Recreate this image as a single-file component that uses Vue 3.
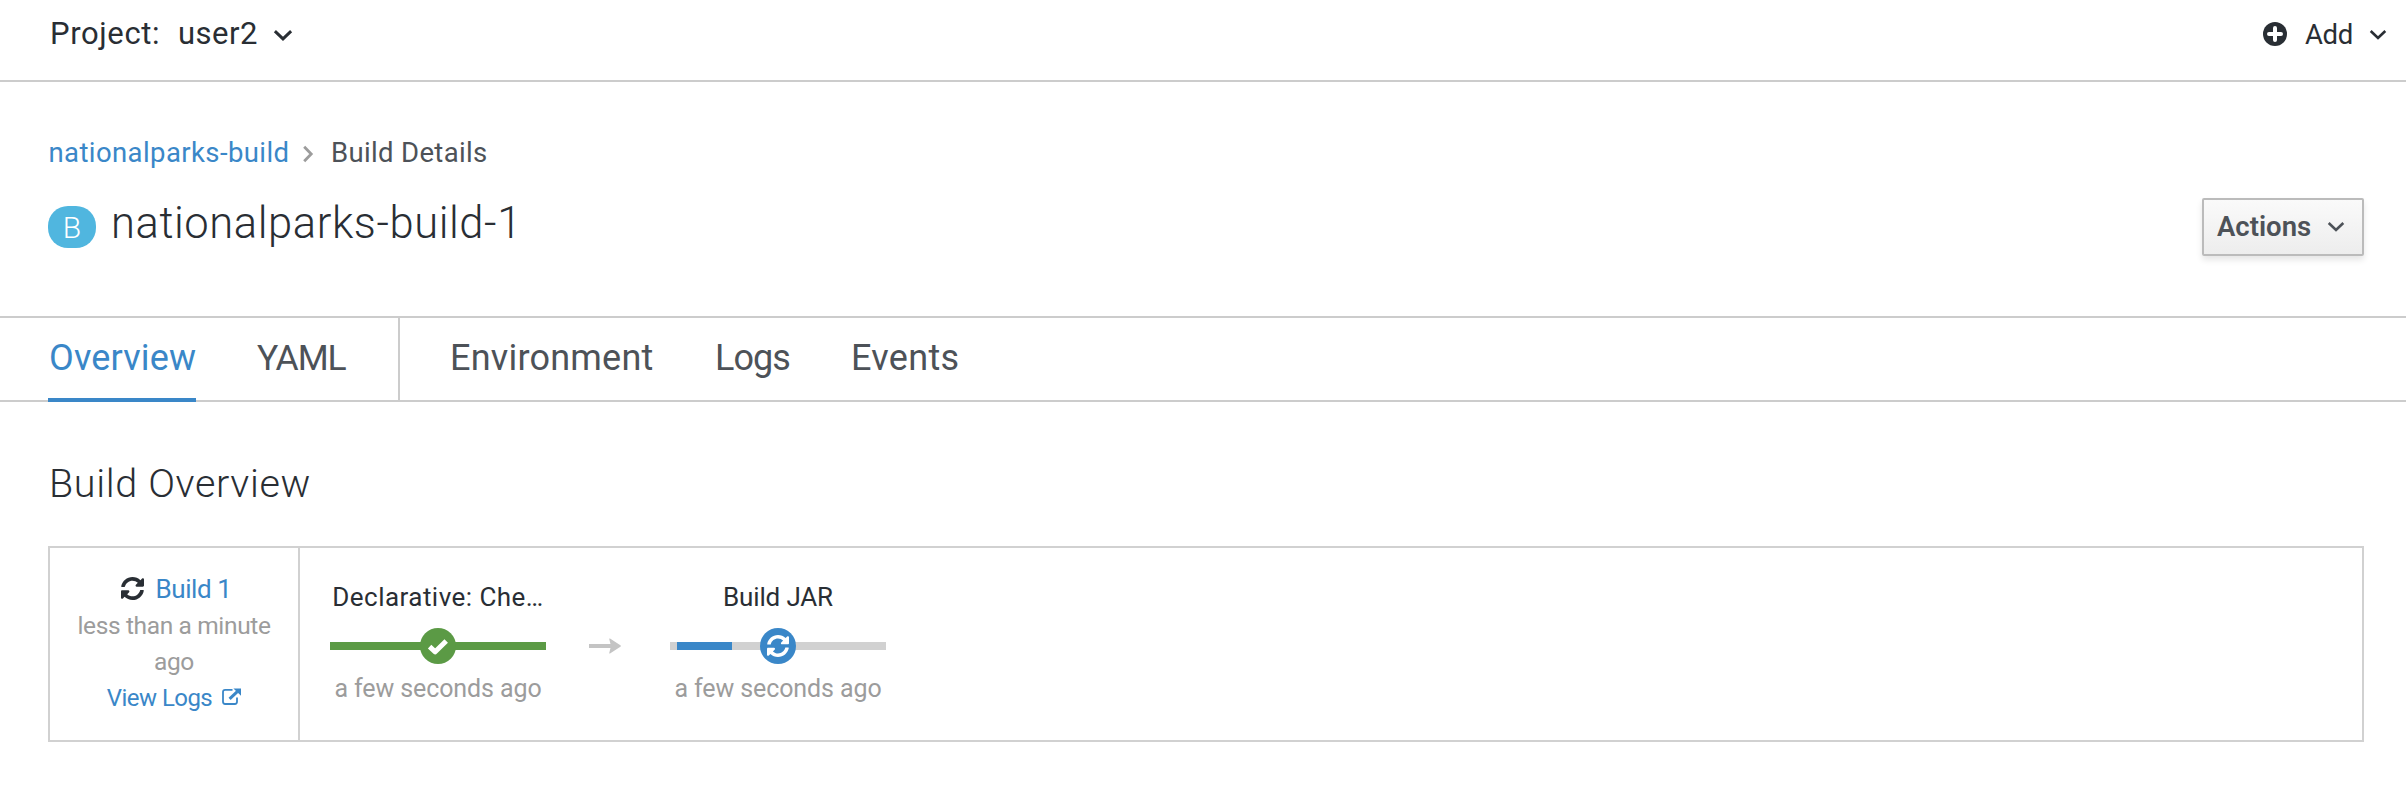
<script setup>
const primaryTabs = [
  { label: 'Overview', key: 'overview', active: true },
  { label: 'YAML', key: 'yaml' },
]
const secondaryTabs = [
  { label: 'Environment', key: 'environment' },
  { label: 'Logs', key: 'logs' },
  { label: 'Events', key: 'events' },
]
const syncPath =
  'M370.72 133.28C339.458 104.008 298.888 87.962 255.848 88c-77.458.068-144.328 53.178-162.791 126.85-1.344 5.363-6.122 9.15-11.651 9.15H24.103c-7.498 0-13.194-6.807-11.807-14.176C33.933 94.924 134.813 8 256 8c66.448 0 126.791 26.136 171.315 68.685L463.03 40.97C478.149 25.851 504 36.559 504 57.941V192c0 13.255-10.745 24-24 24H345.941c-21.382 0-32.09-25.851-16.971-40.971l41.75-41.749zM32 296h134.059c21.382 0 32.09 25.851 16.971 40.971l-41.75 41.75c31.262 29.273 71.835 45.319 114.876 45.28 77.418-.07 144.315-53.144 162.787-126.849 1.344-5.363 6.122-9.15 11.651-9.15h57.304c7.498 0 13.194 6.807 11.807 14.176C478.067 417.076 377.187 504 256 504c-66.448 0-126.791-26.136-171.315-68.685L48.97 471.03C33.851 486.149 8 475.441 8 454.059V320c0-13.255 10.745-24 24-24z'
</script>

<template>
  <div class="page">
    <header class="topbar">
      <div class="project">
        <span class="project-label">Project:</span>
        <span class="project-name">user2</span>
        <svg class="caret caret-project" viewBox="0 0 18 11"><path d="M.9 1.2 9 8.9l8.1-7.7" /></svg>
      </div>
      <div class="add">
        <svg class="plus" viewBox="0 0 24 24">
          <circle cx="12" cy="12" r="12" />
          <path d="M12 6v12M6 12h12" />
        </svg>
        <span class="add-label">Add</span>
        <svg class="caret caret-add" viewBox="0 0 16 10"><path d="M.7 1 8 8l7.3-7" /></svg>
      </div>
    </header>

    <section class="heading">
      <nav class="breadcrumb">
        <a class="crumb-link">nationalparks-build</a>
        <svg class="crumb-sep" viewBox="0 0 10 16"><path d="M1.2.8 8.2 8l-7 7.2" /></svg>
        <span class="crumb-current">Build Details</span>
      </nav>
      <div class="title-row">
        <span class="badge">B</span>
        <h1 class="title">nationalparks-build-1</h1>
        <button class="actions">
          <span class="actions-label">Actions</span>
          <svg class="caret caret-actions" viewBox="0 0 16 10"><path d="M.7 1 8 8l7.3-7" /></svg>
        </button>
      </div>
    </section>

    <nav class="tabs">
      <div class="tab-group primary">
        <a v-for="t in primaryTabs" :key="t.key" class="tab" :class="[t.key, { active: t.active }]">{{ t.label }}</a>
      </div>
      <div class="tab-group secondary">
        <a v-for="t in secondaryTabs" :key="t.key" class="tab" :class="t.key">{{ t.label }}</a>
      </div>
    </nav>

    <main class="content">
      <h2 class="section-title">Build Overview</h2>
      <div class="pipeline">
        <div class="summary">
          <div class="line build-line">
            <svg class="sync" viewBox="8 8 496 496"><path :d="syncPath" /></svg>
            <a class="build-link">Build 1</a>
          </div>
          <div class="line muted since">less than a minute</div>
          <div class="line muted since">ago</div>
          <div class="line logs-line">
            <a class="logs-link">View Logs</a>
            <svg class="external" viewBox="0 0 19 17">
              <path class="frame" d="M10.5 1.8H3.2a2.2 2.2 0 0 0-2.2 2.2v9.8A2.2 2.2 0 0 0 3.2 16h9.6a2.2 2.2 0 0 0 2.2-2.2V9.5" />
              <path class="arrow-line" d="M7.6 10.9 15.3 3.6" />
              <path class="arrow-head" d="M11.4.4H19v7.4Z" />
            </svg>
          </div>
        </div>

        <div class="stages">
          <div class="stage">
            <div class="stage-name declarative">Declarative: Che…</div>
            <div class="track done">
              <span class="dot">
                <svg class="check" viewBox="0 0 22 17"><path d="M2.6 8.6 8.2 13.8 19.2 3" /></svg>
              </span>
            </div>
            <div class="stage-time">a few seconds ago</div>
          </div>
          <svg class="next" viewBox="0 0 32 16">
            <path class="shaft" d="M0 8h23" />
            <path class="head" d="M20.3 1.2Q20 .2 21 .6L31.4 7.2Q32.4 8 31.4 8.7L21 15.4Q20 15.8 20.3 14.8L22 8Z" />
          </svg>
          <div class="stage">
            <div class="stage-name jar">Build JAR</div>
            <div class="track running">
              <span class="progress"></span>
              <span class="dot">
                <svg class="sync-light" viewBox="8 8 496 496"><path :d="syncPath" /></svg>
              </span>
            </div>
            <div class="stage-time">a few seconds ago</div>
          </div>
        </div>
      </div>
    </main>
  </div>
</template>

<style>
body {
  background: #fff;
}
</style>

<style scoped>
.page {
  box-sizing: border-box;
  width: 2406px;
  height: 786px;
  overflow: hidden;
  background: #fff;
  color: #292e34;
  font-family: Roboto, "Liberation Sans", sans-serif;
  white-space: nowrap;
}
.page * {
  box-sizing: border-box;
}
a {
  color: #3a87c8;
}
h1,
h2 {
  margin: 0;
  font-weight: 300;
}
.caret {
  display: block;
  flex: none;
  overflow: visible;
  fill: none;
  stroke: #292e34;
  stroke-width: 2.6;
}
.topbar {
  display: flex;
  justify-content: space-between;
  height: 82px;
  padding: 16px 20px 0 50px;
  border-bottom: 2px solid #ccc;
}
.project {
  display: flex;
  height: 36px;
  font-size: 31px;
  line-height: 36px;
}
.project-label {
  width: 128px;
  letter-spacing: 0.62px;
}
.project-name {
  width: 96px;
  letter-spacing: 0.49px;
}
.caret-project {
  width: 18px;
  height: 11px;
  margin-top: 14px;
  stroke-width: 3;
}
.add {
  display: flex;
  font-size: 27.5px;
  line-height: 37px;
}
.plus {
  width: 24px;
  height: 24px;
  margin-top: 6px;
  fill: #292e34;
}
.plus path {
  stroke: #fff;
  stroke-width: 4;
  stroke-linecap: round;
}
.add-label {
  width: 65px;
  margin-left: 18px;
  letter-spacing: -0.4px;
}
.caret-add {
  width: 16px;
  height: 10px;
  margin-top: 14px;
}
.heading {
  height: 234px;
  padding: 53px 42px 0 48px;
}
.breadcrumb {
  display: flex;
  height: 36px;
  font-size: 27.5px;
  line-height: 36px;
}
.crumb-link {
  width: 255px;
  padding-left: 0.5px;
  letter-spacing: 0.4px;
}
.crumb-sep {
  width: 10px;
  height: 16px;
  margin-top: 11px;
  overflow: visible;
  fill: none;
  stroke: #9c9c9c;
  stroke-width: 2.8;
}
.crumb-current {
  margin-left: 18px;
  color: #4d5258;
  letter-spacing: 0.34px;
}
.title-row {
  display: flex;
  margin-top: 26px;
}
.badge {
  width: 48px;
  height: 42px;
  margin-top: 9px;
  border-radius: 20px;
  background: #50b6df;
  color: #fff;
  font-size: 30px;
  font-weight: 300;
  line-height: 43px;
  text-align: center;
}
.title {
  margin: 1px 0 0 15px;
  font-size: 43.5px;
  line-height: 52px;
  letter-spacing: 0.58px;
}
.actions {
  display: flex;
  width: 162px;
  height: 58px;
  margin: 1px 0 0 auto;
  padding: 0 0 0 13px;
  border: 2px solid #bbb;
  border-radius: 2px;
  background: linear-gradient(#fafafa, #ededed);
  box-shadow: 0 4px 6px rgba(3, 3, 3, 0.1);
  color: #4d5258;
  font-family: inherit;
  font-size: 27.5px;
  font-weight: 600;
  line-height: 54px;
}
.actions-label {
  width: 111px;
  text-align: left;
}
.caret-actions {
  width: 16px;
  height: 10px;
  margin-top: 22px;
  stroke: #4d5258;
}
.tabs {
  display: flex;
  height: 86px;
  border-top: 2px solid #ccc;
  border-bottom: 2px solid #ccc;
}
.tab-group {
  display: flex;
}
.primary {
  width: 400px;
  padding-left: 48px;
  border-right: 2px solid #ccc;
}
.secondary {
  padding-left: 50px;
}
.tab {
  height: 84px;
  color: #4d5258;
  font-size: 36px;
  line-height: 80px;
}
.tab.active {
  border-bottom: 4px solid #3a87c8;
  color: #3a87c8;
}
.overview {
  width: 148px;
  margin-right: 61px;
  padding-left: 1px;
  letter-spacing: 0.16px;
}
.yaml {
  font-size: 35.5px;
  letter-spacing: -1.1px;
}
.environment {
  width: 265px;
  letter-spacing: 0.22px;
}
.logs {
  width: 136px;
  letter-spacing: -0.95px;
}
.events {
  letter-spacing: 0.31px;
}
.content {
  padding: 58px 42px 0 48px;
}
.section-title {
  padding-left: 1px;
  font-size: 39.5px;
  line-height: 48px;
  letter-spacing: 0.65px;
}
.pipeline {
  display: flex;
  height: 196px;
  margin-top: 38px;
  border: 2px solid #d1d1d1;
}
.summary {
  width: 250px;
  padding-top: 24px;
  border-right: 2px solid #d1d1d1;
}
.line {
  display: flex;
  justify-content: center;
  height: 36px;
  line-height: 36px;
}
.muted {
  color: #9c9c9c;
}
.build-line {
  padding-left: 5px;
  font-size: 26px;
  line-height: 35px;
}
.sync {
  width: 23px;
  height: 23px;
  margin: 5px 11px 0 0;
  fill: #292e34;
}
.build-link {
  letter-spacing: -0.4px;
}
.since {
  font-size: 24.5px;
  letter-spacing: -0.36px;
}
.logs-line {
  font-size: 24px;
}
.logs-link {
  letter-spacing: -0.55px;
}
.external {
  width: 19px;
  height: 17px;
  margin: 8px 0 0 10px;
  overflow: visible;
  fill: none;
  stroke: #3a87c8;
}
.frame {
  stroke-width: 1.8;
}
.arrow-line {
  stroke-width: 3;
}
.arrow-head {
  fill: #3a87c8;
  stroke: none;
}
.stages {
  display: flex;
  padding: 31px 0 0 30px;
}
.stage {
  width: 216px;
  text-align: center;
}
.stage-name {
  height: 36px;
  font-size: 26px;
  line-height: 36px;
}
.declarative {
  letter-spacing: 0.46px;
}
.jar {
  letter-spacing: -0.16px;
}
.track {
  display: flex;
  position: relative;
  align-items: center;
  justify-content: center;
  height: 8px;
  margin-top: 27px;
}
.done {
  background: #5b9a45;
}
.running {
  background: #d1d1d1;
}
.progress {
  position: absolute;
  top: 0;
  left: 7px;
  width: 55px;
  height: 8px;
  background: #3a87c8;
}
.dot {
  display: flex;
  position: relative;
  flex: none;
  align-items: center;
  justify-content: center;
  width: 36px;
  height: 36px;
  border-radius: 50%;
  background: #5b9a45;
}
.running .dot {
  background: #3a87c8;
}
.check {
  width: 22px;
  height: 17px;
  fill: none;
  stroke: #fff;
  stroke-width: 5;
  stroke-linejoin: round;
}
.sync-light {
  width: 22px;
  height: 22px;
  fill: #fff;
}
.stage-time {
  margin-top: 21px;
  color: #9c9c9c;
  font-size: 25px;
  line-height: 36px;
  letter-spacing: -0.1px;
}
.next {
  width: 32px;
  height: 16px;
  margin: 59px 49px 0 43px;
}
.shaft {
  stroke: #c4c4c4;
  stroke-width: 4;
}
.head {
  fill: #c4c4c4;
}
</style>
